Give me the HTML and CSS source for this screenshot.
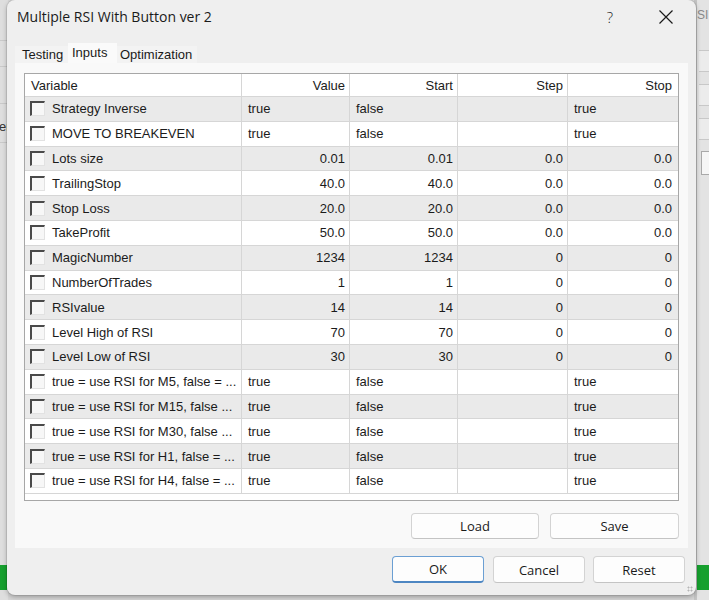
FILE: index.html
```html
<!DOCTYPE html>
<html>
<head>
<meta charset="utf-8">
<link rel="stylesheet" href="styles.css">
</head>
<body>
<div class="desk">
  <div class="strip strip-left">
    <span class="peek peek-er">er</span>
  </div>
  <div class="strip strip-right">
    <span class="peek peek-si">SI</span>
    <span class="ctl ctl1"></span>
    <span class="ctl ctl2"></span>
    <span class="ctl ctl3"></span>
    <span class="box1"></span>
  </div>
  <div class="green green-left"></div>
  <div class="green green-right"></div>

  <div class="dialog">
    <div class="titlebar">
      <span class="title">Multiple RSI With Button ver 2</span>
      <span class="help">?</span>
      <span class="close">
        <svg width="14" height="14" viewBox="0 0 14 14"><path d="M0.5 0.5 L13.5 13.5 M13.5 0.5 L0.5 13.5" stroke="#1a1a1a" stroke-width="1.2" fill="none"/></svg>
      </span>
    </div>
    <div class="tabs">
      <span class="tab t-testing">Testing</span>
      <span class="tab t-inputs active">Inputs</span>
      <span class="tab t-opt">Optimization</span>
    </div>
    <div class="panel">
      <div class="grid">
        <div class="row head">
          <div class="c l">Variable</div>
          <div class="c r">Value</div>
          <div class="c r">Start</div>
          <div class="c r">Step</div>
          <div class="c r">Stop</div>
        </div>
        <div class="row odd"><div class="c v"><i class="cb"></i>Strategy Inverse</div><div class="c l">true</div><div class="c l">false</div><div class="c l"></div><div class="c l">true</div></div>
        <div class="row"><div class="c v"><i class="cb"></i>MOVE TO BREAKEVEN</div><div class="c l">true</div><div class="c l">false</div><div class="c l"></div><div class="c l">true</div></div>
        <div class="row odd"><div class="c v"><i class="cb"></i>Lots size</div><div class="c r">0.01</div><div class="c r">0.01</div><div class="c r">0.0</div><div class="c r">0.0</div></div>
        <div class="row"><div class="c v"><i class="cb"></i>TrailingStop</div><div class="c r">40.0</div><div class="c r">40.0</div><div class="c r">0.0</div><div class="c r">0.0</div></div>
        <div class="row odd"><div class="c v"><i class="cb"></i>Stop Loss</div><div class="c r">20.0</div><div class="c r">20.0</div><div class="c r">0.0</div><div class="c r">0.0</div></div>
        <div class="row"><div class="c v"><i class="cb"></i>TakeProfit</div><div class="c r">50.0</div><div class="c r">50.0</div><div class="c r">0.0</div><div class="c r">0.0</div></div>
        <div class="row odd"><div class="c v"><i class="cb"></i>MagicNumber</div><div class="c r">1234</div><div class="c r">1234</div><div class="c r">0</div><div class="c r">0</div></div>
        <div class="row"><div class="c v"><i class="cb"></i>NumberOfTrades</div><div class="c r">1</div><div class="c r">1</div><div class="c r">0</div><div class="c r">0</div></div>
        <div class="row odd"><div class="c v"><i class="cb"></i>RSIvalue</div><div class="c r">14</div><div class="c r">14</div><div class="c r">0</div><div class="c r">0</div></div>
        <div class="row"><div class="c v"><i class="cb"></i>Level High of RSI</div><div class="c r">70</div><div class="c r">70</div><div class="c r">0</div><div class="c r">0</div></div>
        <div class="row odd"><div class="c v"><i class="cb"></i>Level Low of RSI</div><div class="c r">30</div><div class="c r">30</div><div class="c r">0</div><div class="c r">0</div></div>
        <div class="row"><div class="c v"><i class="cb"></i>true = use RSI for M5, false = ...</div><div class="c l">true</div><div class="c l">false</div><div class="c l"></div><div class="c l">true</div></div>
        <div class="row odd"><div class="c v"><i class="cb"></i>true = use RSI for M15, false ...</div><div class="c l">true</div><div class="c l">false</div><div class="c l"></div><div class="c l">true</div></div>
        <div class="row"><div class="c v"><i class="cb"></i>true = use RSI for M30, false ...</div><div class="c l">true</div><div class="c l">false</div><div class="c l"></div><div class="c l">true</div></div>
        <div class="row odd"><div class="c v"><i class="cb"></i>true = use RSI for H1, false = ...</div><div class="c l">true</div><div class="c l">false</div><div class="c l"></div><div class="c l">true</div></div>
        <div class="row"><div class="c v"><i class="cb"></i>true = use RSI for H4, false = ...</div><div class="c l">true</div><div class="c l">false</div><div class="c l"></div><div class="c l">true</div></div>
        <div class="filler"></div>
      </div>
      <div class="panel-buttons">
        <button class="btn btn-load">Load</button>
        <button class="btn btn-save">Save</button>
      </div>
    </div>
    <div class="footer">
      <button class="btn fbtn ok">OK</button>
      <button class="btn fbtn">Cancel</button>
      <button class="btn fbtn">Reset</button>
    </div>
    <span class="grip"></span>
  </div>
</div>
</body>
</html>
```

FILE: styles.css
```css
* { box-sizing: border-box; }
html, body { margin: 0; padding: 0; }
body {
  width: 709px;
  height: 600px;
  overflow: hidden;
  background: #d6d6d6;
  font-family: "Liberation Sans", Arial, sans-serif;
  color: #1b1b1b;
}
.desk {
  position: relative;
  width: 709px;
  height: 600px;
  padding-left: 7px;
}
.strip {
  position: absolute;
  top: 0;
  height: 600px;
  background: #e6e6e6;
}
.strip-left {
  left: 0;
  width: 8px;
  background:
    linear-gradient(#c9c9c9, #c9c9c9) 0 40px / 8px 1px no-repeat,
    linear-gradient(#c9c9c9, #c9c9c9) 0 66px / 8px 1px no-repeat,
    linear-gradient(#c9c9c9, #c9c9c9) 0 103px / 8px 1px no-repeat,
    linear-gradient(#c9c9c9, #c9c9c9) 0 142px / 8px 1px no-repeat,
    #dedede;
}
.strip-right {
  left: 694px;
  width: 15px;
  background: #e3e3e3;
  border-left: 3px solid #c4c4c4;
}
.peek {
  position: absolute;
  font-size: 13px;
  color: #555;
}
.peek-er { left: -1px; top: 119px; color: #333; }
.peek-si { left: 0; top: 8px; font-size: 12px; color: #8a8a8a; }
.ctl {
  position: absolute;
  left: 2px;
  width: 12px;
  height: 22px;
  border-top: 1px solid #c8c8c8;
  border-bottom: 1px solid #c8c8c8;
  background: #ececec;
}
.ctl1 { top: 50px; }
.ctl2 { top: 84px; }
.ctl3 { top: 118px; }
.box1 {
  position: absolute;
  left: 4px;
  top: 151px;
  width: 12px;
  height: 24px;
  border: 1px solid #a9a9a9;
  background: #f6f6f6;
}
.green {
  position: absolute;
  top: 565px;
  height: 25px;
  background: #16a02e;
}
.green-left { left: 0; width: 7px; }
.green-right { left: 697px; width: 12px; }

.dialog {
  position: relative;
  width: 689px;
  height: 595px;
  background: #efefef;
  border-radius: 8px;
  box-shadow: 0 2px 5px rgba(0,0,0,0.28), 0 0 0 1px rgba(0,0,0,0.08);
  display: flex;
  flex-direction: column;
}
.titlebar {
  height: 31px;
  display: flex;
  align-items: center;
  padding-left: 10px;
  padding-top: 2px;
}
.title {
  font-family: "Open Sans", "Noto Sans", sans-serif;
  font-size: 14px;
  color: #1a1a1a;
  flex: 1;
}
.help {
  font-family: "Open Sans", sans-serif;
  font-size: 15px;
  font-weight: 300;
  color: #222;
  margin-right: 46px;
}
.close {
  display: flex;
  margin-right: 23px;
  margin-top: 1px;
}
.tabs {
  margin-top: 12px;
  margin-left: 8px;
  height: 20px;
  display: flex;
  align-items: flex-end;
}
.tab {
  font-size: 13px;
  height: 17px;
  line-height: 17px;
  background: #f3f3f3;
  color: #1a1a1a;
}
.t-testing { padding: 0 4px 0 7px; width: 53px; }
.t-inputs { width: 49px; padding-left: 4px; }
.t-opt { width: 80px; padding-left: 3px; }
.tab.active {
  height: 20px;
  line-height: 19px;
  background: #fafafa;
}
.panel {
  margin: 0 8px;
  height: 485px;
  background: #f9f9f9;
  padding: 10px 9px 0 9px;
}
.grid {
  height: 428px;
  border: 1px solid #a7a7a7;
  background: #ffffff;
  display: flex;
  flex-direction: column;
  font-size: 13px;
}
.row {
  display: grid;
  grid-template-columns: 217px 108px 108px 110px 1fr;
  height: 24.8px;
  border-bottom: 1px solid #d6d6d6;
  flex: none;
}
.row.head {
  height: 23px;
  background: #fff;
}
.row.odd { background: #eaeaea; }
.c {
  border-right: 1px solid #d6d6d6;
  display: flex;
  align-items: center;
  white-space: nowrap;
  overflow: hidden;
  padding: 0 6px;
}
.c:last-child { border-right: none; }
.c.r { justify-content: flex-end; padding-right: 4px; }
.c.l { justify-content: flex-start; padding-left: 6px; }
.row .c:nth-child(5).r { padding-right: 6px; }
.c.v { padding-left: 5px; }
.cb {
  display: inline-block;
  width: 15px;
  height: 15px;
  margin-right: 7px;
  border-top: 2px solid #4a4a4a;
  border-left: 2px solid #4a4a4a;
  border-right: 1px solid #e2e2e2;
  border-bottom: 1px solid #e2e2e2;
  background: #f7f7f7;
  flex: none;
}
.filler { flex: 1; }
.panel-buttons {
  display: flex;
  justify-content: flex-end;
  gap: 11px;
  margin-top: 12px;
}
.btn {
  font-family: "Open Sans", "Noto Sans", sans-serif;
  font-size: 13px;
  color: #1a1a1a;
  background: #fdfdfd;
  border: 1px solid #d3d3d3;
  border-bottom-color: #c4c4c4;
  border-radius: 4px;
  height: 26px;
  padding: 0;
}
.btn-load { width: 128px; }
.btn-save { width: 129px; }
.footer {
  display: flex;
  justify-content: flex-end;
  padding: 8px 11px 0 0;
  gap: 9px;
}
.fbtn {
  width: 92px;
  height: 27px;
}
.fbtn:last-child { margin-left: -1px; }
.ok {
  border: 1px solid #6b9fd3;
  border-bottom: 2px solid #4d86c2;
}
.grip {
  position: absolute;
  right: 3px;
  bottom: 3px;
  width: 6px;
  height: 6px;
  background: radial-gradient(circle, #b5b5b5 0.8px, transparent 1.2px) 0 0 / 3px 3px;
}
```
